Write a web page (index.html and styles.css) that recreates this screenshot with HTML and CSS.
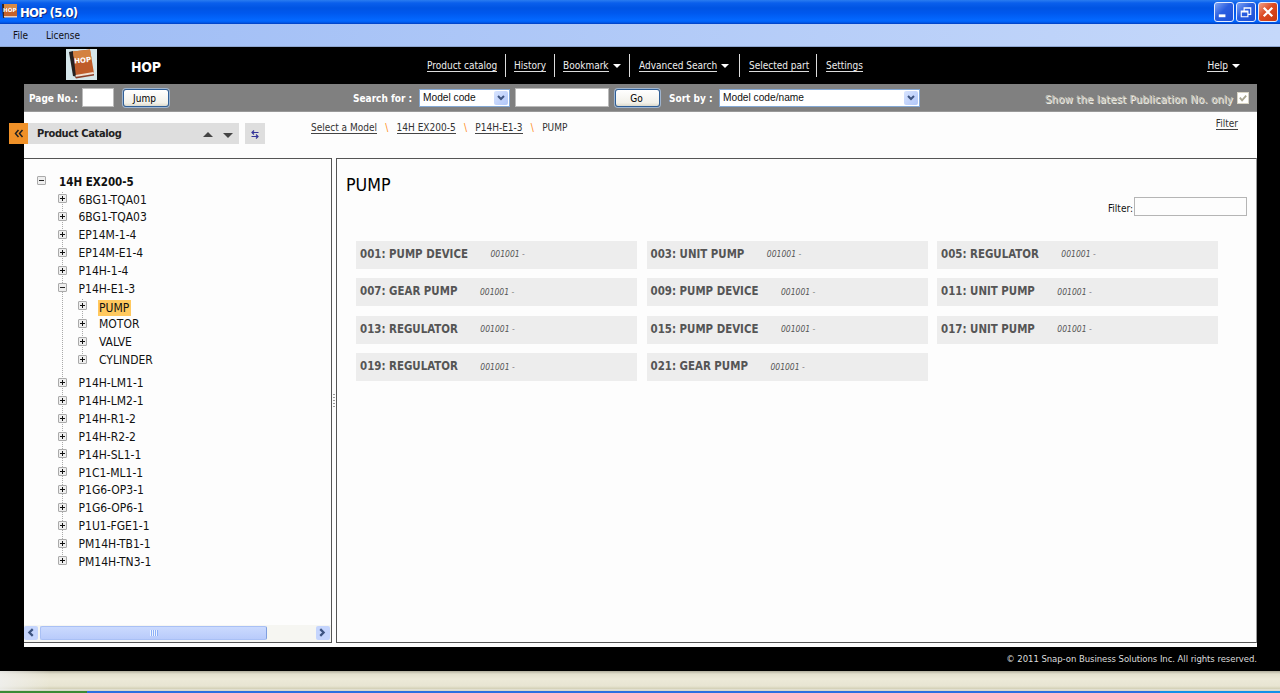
FILE: index.html
```
<!DOCTYPE html>
<html lang="en">
<head>
    <meta charset="UTF-8" />
    <meta name="viewport" content="width=device-width, initial-scale=1.0" />
    <title>HOP (5.0)</title>
    <link rel="stylesheet" href="styles.css">
</head>
<body>
<div class="titlebar">
    <svg class="title-icon" viewBox="0 0 15 16">
        <path d="M0 1h3v14H1z" fill="#3a2420" />
        <path d="M2 1h13v12H2z" fill="#c4622c" />
        <path d="M2 1h13v4H2z" fill="#d88a45" />
        <path d="M2 13h13v1.500H2z" fill="#e8d0c0" />
        <text x="1" y="8.500">HOP</text>
    </svg>
    <span class="title-text">HOP (5.0)</span>
    <div class="window-buttons">
        <button class="win-btn"><svg viewBox="0 0 19 19"><path d="M4 13.500h7" stroke-width="3" /></svg></button>
        <button class="win-btn"><svg viewBox="0 0 19 19"><path d="M7.500 8V5h7v7h-3M7 5.500h8M4.500 8.500h7v6h-7zM4 9.500h8" /></svg></button>
        <button class="win-btn win-close"><svg viewBox="0 0 19 19"><path d="M5 5l9 9M14 5l-9 9" stroke-width="2.400" /></svg></button>
    </div>
</div>

<div class="menubar">
    <span class="menu-file">File</span>
    <span>License</span>
</div>

<div class="app">
    <header>
        <svg class="logo" viewBox="0 0 31 31">
            <rect width="31" height="31" fill="#d5e6ea" />
            <path d="M3 3l4-1 4 26-4-1z" fill="#25201f" />
            <path d="M7 2.500L24 .500l4 24-18 3z" fill="#bf5c2a" />
            <path d="M7 2.500L24 .500l1.500 9L8.500 12z" fill="#d48240" />
            <path d="M9.500 26l18-3 .500 2-18 3z" fill="#f0dfd2" />
            <path d="M9 28l19-3v1.500L10 29.500z" fill="#8b3c25" />
            <text x="8.500" y="14.500" transform="rotate(-6 9 14.500)">HOP</text>
        </svg>
        <h1>HOP</h1>
        <nav>
            <div class="nav-item nav-catalog"><a>Product catalog</a></div>
            <div class="nav-item nav-history"><a>History</a></div>
            <div class="nav-item nav-bookmark"><a>Bookmark</a><i class="caret"></i></div>
            <div class="nav-item nav-search"><a>Advanced Search</a><i class="caret"></i></div>
            <div class="nav-item nav-part"><a>Selected part</a></div>
            <div class="nav-item nav-settings"><a>Settings</a></div>
        </nav>
        <div class="help"><a>Help</a><i class="caret"></i></div>
    </header>

    <div class="page">
        <div class="toolbar">
            <label class="label-page">Page No.:</label>
            <div class="field field-page"></div>
            <button class="btn btn-jump">Jump</button>
            <label class="label-search">Search for :</label>
            <div class="select select-code"><span>Model code</span><i class="drop"><svg viewBox="0 0 8 6"><path d="M1 1l3 3 3-3" /></svg></i></div>
            <div class="field field-search"></div>
            <button class="btn btn-go">Go</button>
            <label class="label-sort">Sort by :</label>
            <div class="select select-sort"><span>Model code/name</span><i class="drop"><svg viewBox="0 0 8 6"><path d="M1 1l3 3 3-3" /></svg></i></div>
            <div class="latest">
                <span>Show the latest Publication No. only</span>
                <i class="check"><svg viewBox="0 0 11 11"><path d="M2 5l2.500 3L9 3" /></svg></i>
            </div>
        </div>

        <div class="subbar">
            <div class="catalog-head">
                <button class="collapse"><svg viewBox="0 0 10 9"><path d="M4.500 1L1.500 4.500l3 3.500M8.500 1L5.500 4.500l3 3.500" /></svg></button>
                <div class="catalog-title">
                    <span>Product Catalog</span>
                    <i class="tri-up"></i>
                    <i class="tri-down"></i>
                </div>
                <button class="sync"><svg viewBox="0 0 8 9"><path d="M7.500 2.500H1M3 .500L1 2.500l2 2M.500 6.500H7M5 4.500l2 2-2 2" /></svg></button>
            </div>
            <div class="breadcrumb">
                <a>Select a Model</a><b>\</b><a>14H EX200-5</a><b>\</b><a>P14H-E1-3</a><b>\</b><span>PUMP</span>
            </div>
            <a class="filter-link">Filter</a>
        </div>

        <main>
            <aside class="tree-panel">
                <ul class="tree">
                    <li class="root"><i class="toggle minus"></i><span>14H EX200-5</span>
                        <ul>
                            <li><i class="toggle"></i><span>6BG1-TQA01</span></li>
                            <li><i class="toggle"></i><span>6BG1-TQA03</span></li>
                            <li><i class="toggle"></i><span>EP14M-1-4</span></li>
                            <li><i class="toggle"></i><span>EP14M-E1-4</span></li>
                            <li><i class="toggle"></i><span>P14H-1-4</span></li>
                            <li><i class="toggle minus"></i><span>P14H-E1-3</span>
                                <ul class="sub">
                                    <li><i class="toggle"></i><span class="selected">PUMP</span></li>
                                    <li><i class="toggle"></i><span>MOTOR</span></li>
                                    <li><i class="toggle"></i><span>VALVE</span></li>
                                    <li><i class="toggle"></i><span>CYLINDER</span></li>
                                </ul>
                            </li>
                            <li><i class="toggle"></i><span>P14H-LM1-1</span></li>
                            <li><i class="toggle"></i><span>P14H-LM2-1</span></li>
                            <li><i class="toggle"></i><span>P14H-R1-2</span></li>
                            <li><i class="toggle"></i><span>P14H-R2-2</span></li>
                            <li><i class="toggle"></i><span>P14H-SL1-1</span></li>
                            <li><i class="toggle"></i><span>P1C1-ML1-1</span></li>
                            <li><i class="toggle"></i><span>P1G6-OP3-1</span></li>
                            <li><i class="toggle"></i><span>P1G6-OP6-1</span></li>
                            <li><i class="toggle"></i><span>P1U1-FGE1-1</span></li>
                            <li><i class="toggle"></i><span>PM14H-TB1-1</span></li>
                            <li><i class="toggle"></i><span>PM14H-TN3-1</span></li>
                        </ul>
                    </li>
                </ul>
                <div class="scrollbar">
                    <i class="scroll-btn"><svg viewBox="0 0 6 8"><path d="M5 1L2 4l3 3" /></svg></i>
                    <div class="thumb"><i class="grip"></i></div>
                    <i class="scroll-btn"><svg viewBox="0 0 6 8"><path d="M1 1l3 3-3 3" /></svg></i>
                </div>
            </aside>
            <div class="splitter"><i></i></div>
            <section class="content">
                <h2>PUMP</h2>
                <div class="filter"><label>Filter:</label><div class="filter-input"></div></div>
                <div class="cards">
                    <div class="card"><b>001: PUMP DEVICE</b><em>001001 -</em></div>
                    <div class="card"><b>003: UNIT PUMP</b><em>001001 -</em></div>
                    <div class="card"><b>005: REGULATOR</b><em>001001 -</em></div>
                    <div class="card"><b>007: GEAR PUMP</b><em>001001 -</em></div>
                    <div class="card"><b>009: PUMP DEVICE</b><em>001001 -</em></div>
                    <div class="card"><b>011: UNIT PUMP</b><em>001001 -</em></div>
                    <div class="card"><b>013: REGULATOR</b><em>001001 -</em></div>
                    <div class="card"><b>015: PUMP DEVICE</b><em>001001 -</em></div>
                    <div class="card"><b>017: UNIT PUMP</b><em>001001 -</em></div>
                    <div class="card"><b>019: REGULATOR</b><em>001001 -</em></div>
                    <div class="card"><b>021: GEAR PUMP</b><em>001001 -</em></div>
                </div>
            </section>
        </main>
    </div>

    <footer>© 2011 Snap-on Business Solutions Inc. All rights reserved.</footer>
</div>

<div class="statusbar"></div>
<div class="taskbar"><div class="start"></div><div class="tray"></div></div>
</body>
</html>
```

FILE: styles.css
```
:root {
    --ui-font: "DejaVu Sans Condensed", "DejaVu Sans", sans-serif;
    --line: #555;
    --card-bg: #ededed;
    --accent: #f09128;
}

* {
    box-sizing: border-box;
    margin: 0;
    padding: 0;
}

body {
    width: 1280px;
    height: 693px;
    overflow: hidden;
    font-family: var(--ui-font);
    font-stretch: condensed;
    font-size: 10px;
    color: #111;
    display: flex;
    flex-direction: column;
}

svg {
    display: block;
    fill: none;
}

button {
    font: inherit;
    border: none;
}

/* window chrome */
.titlebar {
    height: 24px;
    flex: none;
    display: flex;
    align-items: center;
    padding: 0 2px;
    background: linear-gradient(#2a7cf0 0, #0a5fec 3px, #0054e3 8px, #0058ee 13px, #0368ff 20px, #0060f5 22px, #003dc0 24px);
}

.title-icon {
    width: 15px;
    height: 16px;
    margin-top: -2px;
}

.title-icon text {
    font: bold 5.6px "DejaVu Sans", sans-serif;
    fill: #fff;
}

.title-text {
    margin-left: 3px;
    font-size: 13px;
    font-weight: bold;
    letter-spacing: -0.7px;
    color: #fff;
    text-shadow: 1px 1px #0a2a80;
}

.window-buttons {
    margin-left: auto;
    display: flex;
    gap: 2px;
}

.win-btn {
    width: 20px;
    height: 20px;
    border: 1px solid #e4ecff;
    border-radius: 3px;
    background: linear-gradient(135deg, #7fa4f4, #2a5ee0 45%, #1c50d8);
}

.win-btn svg {
    width: 18px;
    height: 18px;
    stroke: #fff;
    stroke-width: 1.2;
}

.win-close {
    background: linear-gradient(135deg, #f0a088, #dc4a22 45%, #c83a10);
}

.menubar {
    height: 23px;
    flex: none;
    display: flex;
    align-items: center;
    padding-left: 13px;
    border-bottom: 1px solid #8ea6d0;
    background: linear-gradient(90deg, #9ebcf5, #c5d8fa);
}

.menu-file {
    width: 33px;
}

/* application frame */
.app {
    height: 624px;
    flex: none;
    padding: 0 23px 0 24px;
    background: #000;
}

header {
    height: 37px;
    display: flex;
    align-items: center;
    color: #eee;
}

header a {
    border-bottom: 1px solid #ddd;
    line-height: 11px;
}

.logo {
    width: 31px;
    height: 31px;
    margin: -3px 0 0 42px;
}

.logo text {
    font: bold 7px "DejaVu Sans", sans-serif;
    fill: #fff;
}

h1 {
    width: 290px;
    margin-left: 34px;
    padding-top: 3px;
    font-size: 14px;
    letter-spacing: -0.2px;
    color: #fff;
}

nav {
    display: flex;
    margin-left: 6px;
}

.nav-item {
    height: 23px;
    padding: 1px 0 0 8px;
    display: flex;
    align-items: center;
    border-left: 1px solid #ddd;
}

.nav-catalog {
    width: 78px;
    padding-left: 0;
    border-left: none;
}

.nav-history {
    width: 49px;
}

.nav-bookmark {
    width: 75px;
}

.nav-search {
    width: 110px;
    padding-left: 9px;
}

.nav-part {
    width: 77px;
    padding-left: 9px;
}

.nav-settings {
    padding-left: 9px;
}

.caret {
    margin-left: 4px;
    border: 4px solid transparent;
    border-top-color: #fff;
    border-bottom: none;
}

.help {
    margin-left: auto;
    margin-right: 17px;
    display: flex;
    align-items: center;
}

.page {
    height: 563px;
    background: #fdfdfd;
    display: flex;
    flex-direction: column;
}

.toolbar {
    height: 28px;
    flex: none;
    display: flex;
    align-items: center;
    padding: 0 8px 0 5px;
    background: #808080;
    border-bottom: 1px solid #999;
}

.toolbar label {
    padding-top: 1px;
    font-weight: bold;
    color: #fff;
}

.label-page {
    width: 53px;
}

.field {
    height: 19px;
    background: #fff;
    border: 1px solid #bbb;
}

.field-page {
    width: 32px;
}

.btn {
    height: 18px;
    padding-top: 1px;
    border: 1px solid #2f5f98;
    border-radius: 3px;
    background: linear-gradient(#fff, #f2f1ea 80%, #dcd9cc);
    box-shadow: 0 0 0 1px #9fb5cf;
}

.btn-jump {
    width: 46px;
    margin-left: 9px;
    padding-right: 3px;
}

.label-search {
    width: 66px;
    margin-left: 184px;
}

.select {
    height: 18px;
    display: flex;
    align-items: center;
    justify-content: space-between;
    padding: 0 1px 0 3px;
    background: #fff;
    border: 1px solid #84a8d4;
    font-family: "Liberation Sans", sans-serif;
    font-size: 10.2px;
}

.select-code {
    width: 91px;
}

.drop {
    width: 14px;
    height: 14px;
    padding: 4px 3px;
    border-radius: 2px;
    background: linear-gradient(135deg, #d8e4ff, #b0c6f8);
}

.drop svg {
    width: 8px;
    height: 6px;
    stroke: #3d5480;
    stroke-width: 2;
}

.field-search {
    width: 94px;
    margin-left: 5px;
}

.btn-go {
    width: 45px;
    margin-left: 6px;
    padding-right: 2px;
}

.label-sort {
    width: 50px;
    margin-left: 9px;
}

.select-sort {
    width: 201px;
}

.latest {
    margin-left: auto;
    display: flex;
    align-items: center;
    gap: 4px;
    color: #c8c5b8;
    text-shadow: 1px 1px #f4f4ee;
    font-family: "DejaVu Sans", sans-serif;
    font-stretch: normal;
    letter-spacing: 0.22px;
}

.latest span {
    padding-top: 4px;
}

.check {
    width: 12px;
    height: 12px;
    background: #fff;
    border: 1px solid #d8d4c4;
}

.check svg {
    stroke: #a8a590;
    stroke-width: 2;
}

.subbar {
    height: 46px;
    flex: none;
    display: flex;
    align-items: flex-start;
}

.catalog-head {
    height: 21px;
    display: flex;
    margin: 11px 0 0 -15px;
}

.collapse {
    width: 19px;
    padding: 0 5px 1px;
    background: var(--accent);
}

.collapse svg {
    width: 10px;
    height: 9px;
    stroke: #222;
    stroke-width: 1.5;
}

.catalog-title {
    width: 211px;
    display: flex;
    align-items: center;
    padding-left: 9px;
    background: #dedede;
    font-size: 11px;
    font-weight: bold;
    letter-spacing: -0.35px;
    color: #222;
}

.catalog-title span {
    width: 166px;
}

.tri-up,
.tri-down {
    border: 5px solid transparent;
}

.tri-up {
    border-top: none;
    border-bottom-color: #444;
    margin-top: 2px;
}

.tri-down {
    border-bottom: none;
    border-top-color: #444;
    margin: 4px 0 0 10px;
}

.sync {
    width: 20px;
    margin-left: 6px;
    padding: 1px 6px 0;
    background: #dedede;
}

.sync svg {
    width: 8px;
    height: 9px;
    stroke: #35359a;
    stroke-width: 1.2;
}

.breadcrumb {
    margin: 10px 0 0 46px;
    display: flex;
    color: #333;
    line-height: 12px;
}

.breadcrumb a,
.filter-link {
    height: 12px;
    border-bottom: 1px solid #444;
}

.breadcrumb b {
    width: 19.6px;
    text-align: center;
    font-weight: normal;
    color: #ff8c1a;
}

.filter-link {
    margin: 6px 19px 0 auto;
    line-height: 12px;
    color: #333;
}

main {
    height: 485px;
    flex: none;
    display: flex;
}

.tree-panel {
    width: 307.5px;
    display: flex;
    flex-direction: column;
    border: 1px solid var(--line);
    border-left: none;
}

.tree {
    flex: 1;
    padding: 14.8px 0 0 13px;
    font-size: 12px;
    line-height: 17.83px;
    list-style: none;
}

.tree ul {
    margin-left: 20.5px;
    list-style: none;
    background: repeating-linear-gradient(#aaa 0 1px, transparent 1px 2px) 4px 0 / 1px calc(100% - 9px) no-repeat;
}

.tree .sub {
    margin-bottom: 5.5px;
}

.tree li {
    height: 17.83px;
    display: flex;
    flex-wrap: wrap;
    align-items: center;
}

/* branches with an open sub list grow with it */
.tree li:has(ul) {
    height: auto;
}

.tree li > ul {
    width: 250px;
}

.root > span {
    font-size: 11.5px;
    font-weight: bold;
}

.tree li > span {
    margin-left: 12px;
}

.tree .root > span {
    margin-left: 13px;
}

.tree .selected {
    margin-left: 11px;
    padding: 0 2px 0 1px;
    line-height: 16px;
    background: #ffc95f;
}

.toggle {
    width: 9px;
    height: 9px;
    margin-top: -3.5px;
    border: 1px solid #aaa;
    border-radius: 1px;
    background:
            linear-gradient(#111, #111) center / 5px 1px no-repeat,
            linear-gradient(#111, #111) center / 1px 5px no-repeat,
            #eee;
}

.toggle.minus {
    background: linear-gradient(#222, #222) center / 5px 1px no-repeat, #eee;
}

.scrollbar {
    height: 17px;
    display: flex;
    justify-content: space-between;
    padding: 1px 1px 2px 0;
    background: #f6f6f2;
}

.scroll-btn {
    width: 14px;
    padding: 2px 3px;
    border-radius: 2px;
    background: #c5d5fd;
}

.scroll-btn svg {
    width: 7px;
    height: 9px;
    stroke: #3d5480;
    stroke-width: 2;
}

.thumb {
    width: 227px;
    margin: 0 auto 0 2px;
    display: flex;
    align-items: center;
    justify-content: center;
    border: 1px solid #a9c0f5;
    border-right-color: #7f9fe0;
    border-radius: 2px;
    background: linear-gradient(#cbdafe, #b9cbfb);
}

.grip {
    width: 8px;
    height: 6px;
    background: repeating-linear-gradient(90deg, #eef4fe 0 1px, #8cb0f8 1px 2px);
}

.splitter {
    width: 4.5px;
    display: flex;
    align-items: center;
    justify-content: center;
}

.splitter i {
    width: 2px;
    height: 13px;
    background: repeating-linear-gradient(#999 0 1px, transparent 1px 3px);
}

.content {
    flex: 1;
    border: 1px solid var(--line);
    border-right-color: #999;
}

h2 {
    height: 38px;
    padding: 14px 0 0 9px;
    font-size: 17.7px;
    font-weight: normal;
    line-height: 24px;
    color: #000;
}

.filter {
    height: 19px;
    display: flex;
    align-items: center;
    justify-content: flex-end;
    padding-right: 9px;
    gap: 1px;
}

.filter label {
    padding-top: 4px;
}

.filter-input {
    width: 113px;
    height: 19px;
    border: 1px solid #b5b5b5;
}

.cards {
    display: grid;
    grid-template-columns: repeat(3, 281px);
    grid-auto-rows: 28px;
    gap: 9.5px;
    margin: 24.5px 0 0 19px;
}

.card {
    display: flex;
    align-items: center;
    gap: 22.5px;
    padding: 0 4px 2px;
    background: var(--card-bg);
    color: #555;
}

.card b {
    font-size: 11.4px;
}

.card em {
    font-size: 8.5px;
    padding-top: 1px;
}

footer {
    height: 24px;
    text-align: right;
    line-height: 24px;
    font-family: "DejaVu Sans", sans-serif;
    font-stretch: normal;
    font-size: 8.5px;
    letter-spacing: -0.05px;
    color: #ddd;
}

.statusbar {
    height: 19px;
    flex: none;
    background:
            linear-gradient(90deg, rgba(240, 240, 240, 0.8), transparent 50px),
            linear-gradient(#b0ad9c 0, #e2dfcc 3px, #ece9d8 8px, #e8e5d2 15px, #d2cfb4 18px, #eee 19px);
}

.taskbar {
    height: 3px;
    flex: none;
    display: flex;
    background: #2a6fe0;
    border-top: 1px solid #d8d8c8;
}

.start {
    width: 87px;
    background: #3a8a35;
}

.tray {
    width: 120px;
    margin-left: auto;
    background: #1290e8;
}
```
